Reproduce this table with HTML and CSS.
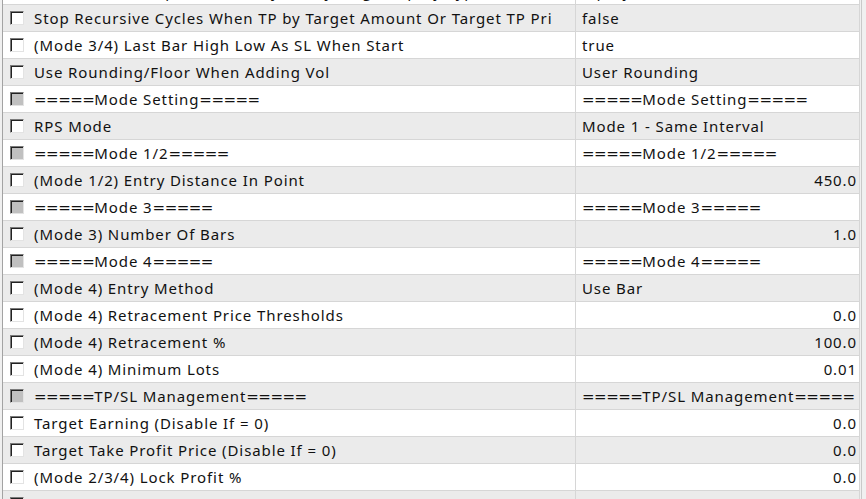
FILE: index.html
```html
<!DOCTYPE html>
<html>
<head>
<meta charset="utf-8">
<link rel="stylesheet" href="styles.css">
</head>
<body>
<div class="sheet">
  <div class="row"><div class="name"><span class="cb"></span><span>(Mode 2/3/4) Stop Recursive Cycles by Target Equity Type</span></div><div class="val">Equity</div></div>
  <div class="row alt"><div class="name"><span class="cb"></span><span>Stop Recursive Cycles When TP by Target Amount Or Target TP Pri</span></div><div class="val">false</div></div>
  <div class="row"><div class="name"><span class="cb"></span><span>(Mode 3/4) Last Bar High Low As SL When Start</span></div><div class="val">true</div></div>
  <div class="row alt"><div class="name"><span class="cb"></span><span>Use Rounding/Floor When Adding Vol</span></div><div class="val">User Rounding</div></div>
  <div class="row"><div class="name"><span class="cb off"></span><span><span class="eq">=====</span>Mode Setting<span class="eq">=====</span></span></div><div class="val"><span><span class="eq">=====</span>Mode Setting<span class="eq">=====</span></span></div></div>
  <div class="row alt"><div class="name"><span class="cb"></span><span>RPS Mode</span></div><div class="val">Mode 1 - Same Interval</div></div>
  <div class="row"><div class="name"><span class="cb off"></span><span><span class="eq">=====</span>Mode 1/2<span class="eq">=====</span></span></div><div class="val"><span><span class="eq">=====</span>Mode 1/2<span class="eq">=====</span></span></div></div>
  <div class="row alt"><div class="name"><span class="cb"></span><span>(Mode 1/2) Entry Distance In Point</span></div><div class="val num">450.0</div></div>
  <div class="row"><div class="name"><span class="cb off"></span><span><span class="eq">=====</span>Mode 3<span class="eq">=====</span></span></div><div class="val"><span><span class="eq">=====</span>Mode 3<span class="eq">=====</span></span></div></div>
  <div class="row alt"><div class="name"><span class="cb"></span><span>(Mode 3) Number Of Bars</span></div><div class="val num">1.0</div></div>
  <div class="row"><div class="name"><span class="cb off"></span><span><span class="eq">=====</span>Mode 4<span class="eq">=====</span></span></div><div class="val"><span><span class="eq">=====</span>Mode 4<span class="eq">=====</span></span></div></div>
  <div class="row alt"><div class="name"><span class="cb"></span><span>(Mode 4) Entry Method</span></div><div class="val">Use Bar</div></div>
  <div class="row"><div class="name"><span class="cb"></span><span>(Mode 4) Retracement Price Thresholds</span></div><div class="val num">0.0</div></div>
  <div class="row alt"><div class="name"><span class="cb"></span><span>(Mode 4) Retracement %</span></div><div class="val num">100.0</div></div>
  <div class="row"><div class="name"><span class="cb"></span><span>(Mode 4) Minimum Lots</span></div><div class="val num">0.01</div></div>
  <div class="row alt"><div class="name"><span class="cb off"></span><span><span class="eq">=====</span>TP/SL Management<span class="eq">=====</span></span></div><div class="val"><span><span class="eq">=====</span>TP/SL Management<span class="eq">=====</span></span></div></div>
  <div class="row"><div class="name"><span class="cb"></span><span>Target Earning (Disable If = 0)</span></div><div class="val num">0.0</div></div>
  <div class="row alt"><div class="name"><span class="cb"></span><span>Target Take Profit Price (Disable If = 0)</span></div><div class="val num">0.0</div></div>
  <div class="row"><div class="name"><span class="cb"></span><span>(Mode 2/3/4) Lock Profit %</span></div><div class="val num">0.0</div></div>
  <div class="row alt"><div class="name"><span class="cb"></span><span>(Mode 2/3/4) Profit Lock After Trades Count (Disable If = 0)</span></div><div class="val num">5</div></div>
</div>
</body>
</html>
```

FILE: styles.css
```css
html, body {
  margin: 0;
  padding: 0;
  background: #f0f0f0;
  overflow: hidden;
  height: 499px;
}

.sheet {
  margin: -22px 0 0 2px;
  width: 857px;
  padding-right: 1px;
  border-left: 1px solid #a3a3a3;
  border-right: 1px solid #c9c9c9;
  background: #f0f0f0;
  font-family: "Noto Sans", "Open Sans", sans-serif;
  font-size: 15px;
  letter-spacing: 0.9px;
  color: #111;
}

.row {
  display: grid;
  grid-template-columns: 573px 284px;
  height: 27px;
  box-sizing: border-box;
  border-bottom: 1px solid #d6d6d6;
  background: #ffffff;
}

.row.alt {
  background: #ebebeb;
}

.name {
  display: flex;
  align-items: center;
  border-right: 1px solid #d6d6d6;
  white-space: nowrap;
  overflow: hidden;
}

.eq {
  font-family: "DejaVu Sans", sans-serif;
  letter-spacing: -0.5px;
}

.cb {
  flex: none;
  width: 14px;
  height: 14px;
  box-sizing: border-box;
  margin: 0 10px 0 7px;
  background: #ffffff;
  border-top: 1px solid #7a7a7a;
  border-left: 1px solid #7a7a7a;
  border-right: 1px solid #e3e3e3;
  border-bottom: 1px solid #e3e3e3;
  box-shadow: inset 1px 1px 0 #222;
}

.cb.off {
  background: #c0c0c0;
}

.val {
  display: flex;
  align-items: center;
  padding: 0 2px 0 6px;
  border-right: 1px solid #d6d6d6;
  white-space: nowrap;
  overflow: hidden;
}

.val.num {
  justify-content: flex-end;
}
```
